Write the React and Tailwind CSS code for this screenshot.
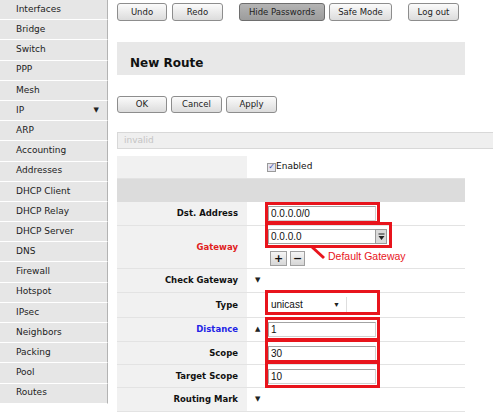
const menu = [
  'Interfaces', 'Bridge', 'Switch', 'PPP', 'Mesh', 'IP', 'ARP', 'Accounting', 'Addresses',
  'DHCP Client', 'DHCP Relay', 'DHCP Server', 'DNS', 'Firewall', 'Hotspot', 'IPsec',
  'Neighbors', 'Packing', 'Pool', 'Routes',
];

const ui = { fontFamily: '"DejaVu Sans", Verdana, sans-serif' };
const field = { fontFamily: '"Liberation Sans", Arial, sans-serif' };

function Btn({ children, w, dark }) {
  return (
    <button
      type="button"
      className={`h-full rounded-[3px] border text-[8.5px] text-[#222] ${dark ? 'border-[#6e6e6e] bg-gradient-to-b from-[#b4b4b4] to-[#9c9c9c]' : 'border-[#8d8d8d] bg-gradient-to-b from-[#fbfbfb] to-[#dcdcdc]'}`}
      style={{ width: w }}
    >
      {children}
    </button>
  );
}

function Down() {
  return <span className="text-[7px] leading-none text-[#222]">▼</span>;
}

function Row({ label, color = 'text-[#111]', h, arrow, children, align = 'items-center' }) {
  return (
    <div className="flex border-b border-[#e3e3e3]" style={{ height: h }}>
      <div className={`flex w-[130px] shrink-0 items-center justify-end bg-[#f1f1f1] pr-[9px] text-[8.5px] font-bold ${color}`}>
        {label}
      </div>
      <div className={`flex flex-1 ${align}`}>
        <div className="flex w-[21px] shrink-0 justify-start pl-[8px]">{arrow}</div>
        {children}
      </div>
    </div>
  );
}

function Input({ value }) {
  return (
    <div
      className="flex h-[15px] w-[108px] items-center border border-[#a3a3a3] border-r-[#d0d0d0] border-b-[#d0d0d0] bg-white pl-[2px] text-[10px] text-[#111]"
      style={field}
    >
      {value}
    </div>
  );
}

export default function App() {
  return (
    <div className="relative flex h-[419px] w-[493px] overflow-hidden bg-white" style={ui}>
      <div className="flex w-[108px] shrink-0 flex-col">
        {menu.map((m) => (
          <div
            key={m}
            className="flex h-[20.2px] items-center justify-between border-b border-r border-b-white border-r-[#b3b3b3] bg-[#e6e6e6] pl-[16px] pr-[8px] text-[9px] text-[#222]"
          >
            <span>{m}</span>
            {m === 'IP' && <span className="text-[7px]">▼</span>}
          </div>
        ))}
      </div>

      <div className="flex flex-1 flex-col pl-[9px]">
        <div className="mt-[3px] flex h-[18px]">
          <Btn w={50}>Undo</Btn>
          <div className="w-[5px]" />
          <Btn w={51}>Redo</Btn>
          <div className="w-[16px]" />
          <Btn w={86} dark>Hide Passwords</Btn>
          <div className="w-[4px]" />
          <Btn w={63}>Safe Mode</Btn>
          <div className="w-[16px]" />
          <Btn w={51}>Log out</Btn>
        </div>

        <div className="mt-[21px] flex h-[33px] w-[348px] items-center bg-[#e8e8e8] pl-[13px] pt-[9px] text-[12px] font-bold text-[#111]">
          New Route
        </div>

        <div className="mt-[21px] flex h-[17px] gap-[4px]">
          <Btn w={50}>OK</Btn>
          <Btn w={51}>Cancel</Btn>
          <Btn w={51}>Apply</Btn>
        </div>

        <div className="mt-[19px] flex h-[17px] w-[390px] items-center border border-[#d8d8d8] bg-[#efefef] pl-[6px] text-[9px] text-[#c4c4c4]">
          invalid
        </div>

        <div className="mt-[7px] flex w-[348px] flex-col">
          <div className="flex h-[23px] border-b border-[#e3e3e3]">
            <div className="w-[130px] bg-[#f1f1f1]" />
            <div className="flex flex-1 items-center pl-[20px] text-[9px] text-[#111]">
              <span className="flex h-[9px] w-[9px] items-center justify-center border border-[#9a9a9a] bg-[#e4e4ee] text-[8px] leading-none text-[#3a4aa8]">✓</span>
              <span>Enabled</span>
            </div>
          </div>
          <div className="h-[23px] bg-[#dcdcdc]" />

          <Row label="Dst. Address" h={24}>
            <Input value="0.0.0.0/0" />
          </Row>

          <Row label="Gateway" color="text-[#e0201c]" h={43} align="items-start">
            <div className="flex flex-col pt-[3px]">
              <div className="flex">
                <div
                  className="flex h-[15px] w-[107px] items-center border border-[#a3a3a3] border-r-0 bg-white pl-[2px] text-[10px] text-[#111]"
                  style={field}
                >
                  0.0.0.0
                </div>
                <div className="flex h-[15px] w-[12px] items-center justify-center border border-[#9a9a9a] bg-[#dadada]">
                  <svg width="7" height="8" viewBox="0 0 7 8">
                    <rect x="0.5" y="0.5" width="6" height="1" fill="#222" />
                    <path d="M0.5 3 H6.5 L3.5 7 Z" fill="#222" />
                  </svg>
                </div>
              </div>
              <div className="mt-[7px] flex gap-[3px] pl-[2px]">
                <div className="flex h-[15px] w-[17px] items-center justify-center border border-[#a0a0a0] bg-gradient-to-b from-[#f6f6f6] to-[#d6d6d6] text-[11px] font-bold leading-none text-[#111]">+</div>
                <div className="flex h-[15px] w-[15px] items-center justify-center border border-[#a0a0a0] bg-gradient-to-b from-[#f6f6f6] to-[#d6d6d6] text-[11px] font-bold leading-none text-[#111]">−</div>
              </div>
            </div>
          </Row>

          <Row label="Check Gateway" h={24} arrow={<Down />} />

          <Row label="Type" h={25}>
            <div
              className="flex h-[16px] w-[79px] items-center justify-between border-b border-r border-[#dedede] bg-white pl-[3px] pr-[6px] text-[10px] text-[#111]"
              style={field}
            >
              <span>unicast</span>
              <Down />
            </div>
          </Row>

          <Row label="Distance" color="text-[#2323e6]" h={24} arrow={<span className="text-[7px] leading-none text-[#222]">▲</span>}>
            <Input value="1" />
          </Row>
          <Row label="Scope" h={23}>
            <Input value="30" />
          </Row>
          <Row label="Target Scope" h={23}>
            <Input value="10" />
          </Row>
          <Row label="Routing Mark" h={24} arrow={<Down />} />
        </div>
      </div>

      <div className="pointer-events-none absolute left-[265px] top-[202px] h-[22px] w-[115px] border-[3px] border-[#e8141c]" />
      <div className="pointer-events-none absolute left-[265px] top-[222px] h-[26px] w-[127px] border-[3px] border-[#e8141c]" />
      <div className="pointer-events-none absolute left-[265px] top-[290px] h-[25px] w-[115px] border-[3px] border-[#e8141c]" />
      <div className="pointer-events-none absolute left-[265px] top-[317px] h-[24px] w-[115px] border-[3px] border-[#e8141c]" />
      <div className="pointer-events-none absolute left-[265px] top-[339px] h-[24px] w-[115px] border-[3px] border-[#e8141c]" />
      <div className="pointer-events-none absolute left-[265px] top-[361px] h-[27px] w-[115px] border-[3px] border-[#e8141c]" />
      <svg className="pointer-events-none absolute left-[308px] top-[245px]" width="20" height="16" viewBox="0 0 20 16">
        <line x1="4" y1="2" x2="16" y2="13" stroke="#e8141c" strokeWidth="3" />
      </svg>
      <div
        className="absolute left-[328px] top-[251px] text-[10.5px] leading-none text-[#e8141c]"
        style={field}
      >
        Default Gateway
      </div>
    </div>
  );
}
